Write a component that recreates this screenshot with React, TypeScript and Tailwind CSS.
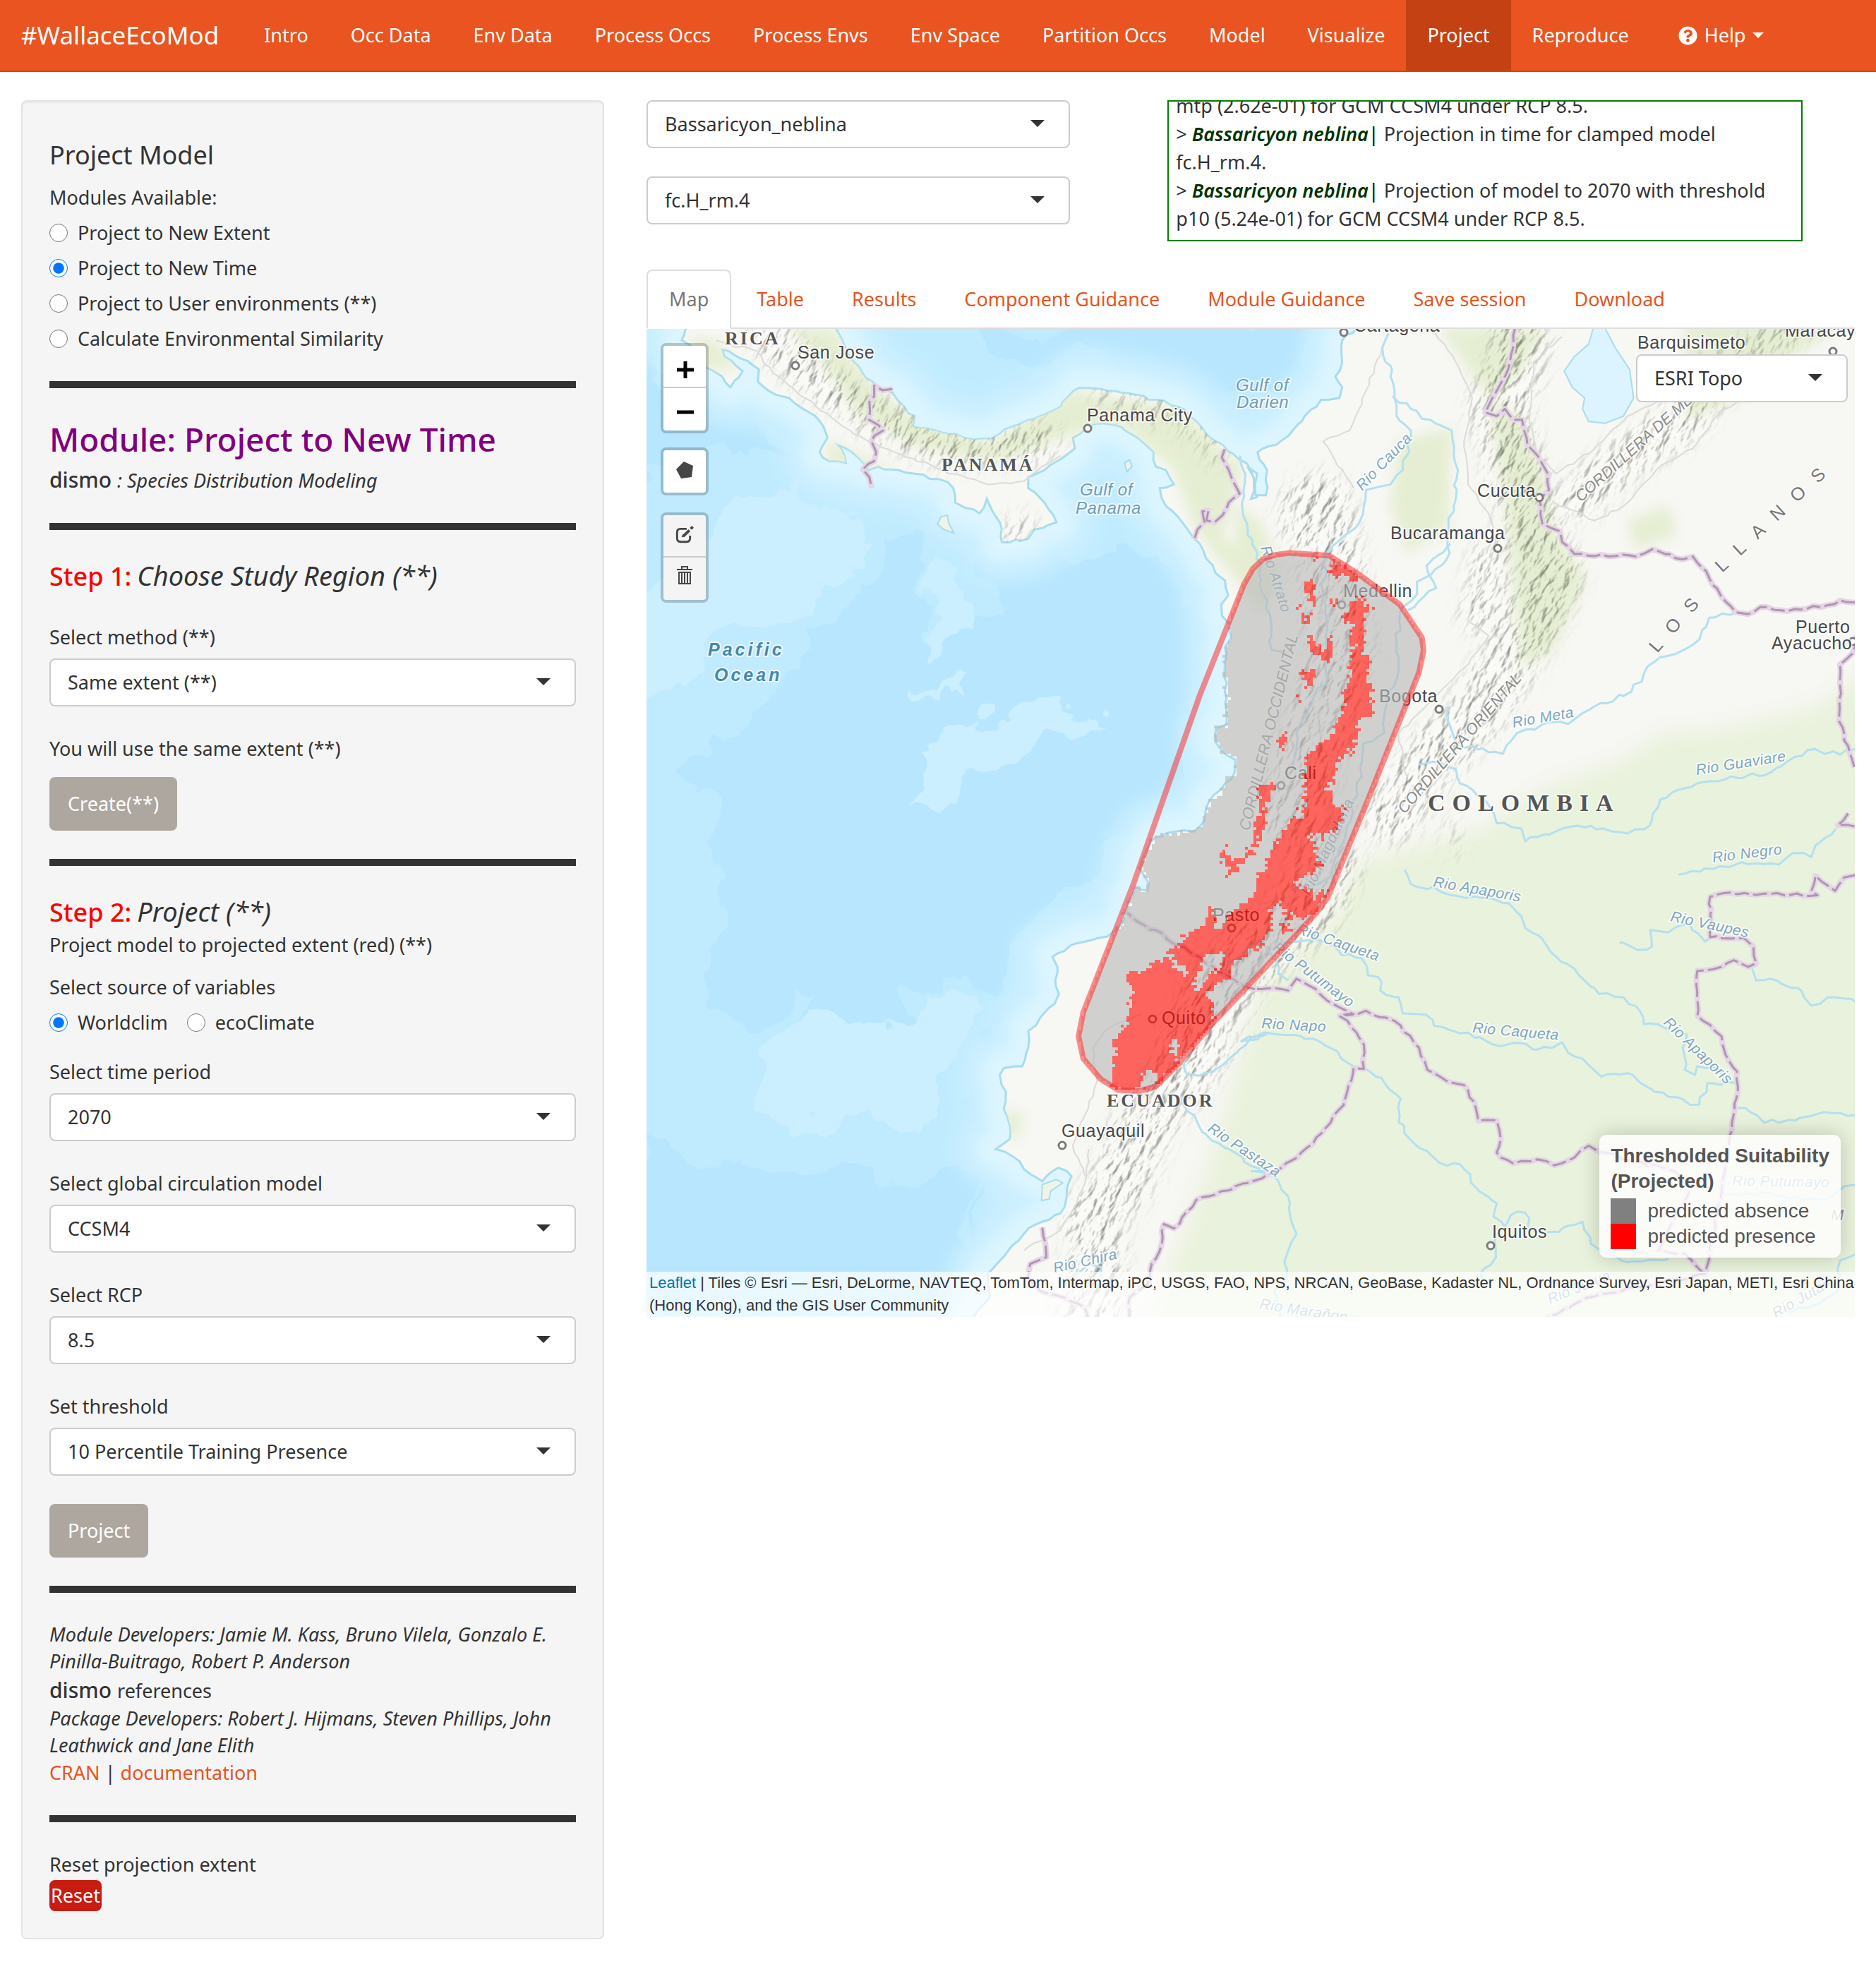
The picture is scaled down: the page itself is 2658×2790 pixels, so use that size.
import { useState, type ReactNode } from "react";
import { FaQuestionCircle } from "react-icons/fa";

/* ------------------------------------------------------------------ */
/* Map geometry                                                        */
/* ------------------------------------------------------------------ */

type Pt = [number, number];

/* Survey sheets: each one has its own origin and scale on the chart. */
const sheets = {
  A: [900, 360, 0.57398, 0.5102],
  B: [1750, 360, 0.57908, 0.5102],
  C: [1450, 760, 0.44643, 0.52296],
  D: [900, 1150, 0.57398, 0.47832],
  E: [1750, 1150, 0.57908, 0.47832],
} as const;

type Sheet = keyof typeof sheets;

function trace(...parts: [Sheet, string][]): Pt[] {
  const out: Pt[] = [];
  for (const [name, list] of parts) {
    const [ox, oy, sx, sy] = sheets[name];
    for (const pair of list.trim().split(/\s+/)) {
      const [x, y] = pair.split(",").map(Number);
      out.push([ox + x * sx, oy + y * sy]);
    }
  }
  return out;
}

function hash(a: number, b: number) {
  const s = Math.sin(a * 12.9898 + b * 78.233) * 43758.5453;
  return s - Math.floor(s) - 0.5;
}

function wobble(points: Pt[], amp: number, closed = false): Pt[] {
  const src = closed ? [...points, points[0]] : points;
  const out: Pt[] = [src[0]];
  for (let i = 1; i < src.length; i++) {
    const [x0, y0] = src[i - 1];
    const [x1, y1] = src[i];
    const len = Math.hypot(x1 - x0, y1 - y0);
    const n = Math.max(1, Math.floor(len / 9));
    for (let k = 1; k <= n; k++) {
      const t = k / n;
      const j = k === n ? 0 : amp;
      out.push([
        x0 + (x1 - x0) * t + hash(x0 + k, y1) * j,
        y0 + (y1 - y0) * t + hash(y0 + k, x1) * j,
      ]);
    }
  }
  return out;
}

const toPath = (points: Pt[], closed = false) =>
  "M" + points.map(([x, y]) => `${x.toFixed(1)} ${y.toFixed(1)}`).join("L") + (closed ? "Z" : "");

function inside(points: Pt[], x: number, y: number) {
  let hit = false;
  for (let i = 0, j = points.length - 1; i < points.length; j = i++) {
    const [xi, yi] = points[i];
    const [xj, yj] = points[j];
    if (yi > y !== yj > y && x < ((xj - xi) * (y - yi)) / (yj - yi) + xi) hit = !hit;
  }
  return hit;
}

/* Turns an area into the square cells of a raster layer, row by row. */
function rasterise(test: (x: number, y: number) => boolean, within: Pt[], jag: number) {
  const cell = 4;
  let d = "";
  for (let y = 760; y < 1560; y += cell) {
    let start = -1;
    for (let x = 1520; x <= 2032; x += cell) {
      const px = x + cell / 2 + hash(y, Math.floor(x / 8)) * jag;
      const py = y + cell / 2 + hash(x, Math.floor(y / 8)) * jag;
      const on = x < 2032 && inside(within, x + 2, y + 2) && test(px, py);
      if (on && start < 0) start = x;
      if (!on && start >= 0) {
        d += `M${start} ${y}H${x}V${y + cell}H${start}Z`;
        start = -1;
      }
    }
  }
  return d;
}

const land = trace(
  ["A", "490,180 495,206 515,250 540,300 570,345 610,375 635,385 665,425 690,450 685,480 740,490 790,500 830,515 880,512 930,480 1000,450 1050,425 1070,395 1095,372 1150,375 1200,385 1290,405 1340,425 1380,460 1410,500 1450,530 1490,570 1520,600 1527,640 1520,680 1535,675 1530,640 1535,610"],
  ["B", "30,590 45,620 50,670 75,670 78,600 55,550 100,530 130,505 170,450 210,405 255,400 262,370 245,340 262,300 262,240 300,206 320,150 1560,150"],
  ["E", "1560,1560"],
  ["D", "830,1560 835,1497 875,1440 870,1370 900,1330 960,1250 1005,1215 1050,1190 1065,1140 1077,1080 1045,1055 1030,1065 1005,1095 960,1060 930,1020 890,1000 925,970 925,930 910,880 915,830 900,780 910,760 955,755 970,700 970,650 1000,610 1035,570 1046,540 1037,500 1042,460 1030,430 1090,390 1165,370 1200,335 1215,290"],
  ["C", "330,1000 355,950 395,960 398,940 370,900 385,860 420,815 480,800 540,800 575,770 580,735 640,670 670,640 672,605 640,590 612,560 612,520 645,510 645,440 640,340 640,300 660,275 655,240 630,215 628,185 650,160 640,120 610,100 580,60 560,20"],
  ["A", "1380,790 1340,730 1310,700 1295,650 1330,640 1310,600 1285,590 1280,550 1240,510 1200,480 1150,470 1117,480 1080,510 1085,540 1050,570 1010,600 970,620 970,650 1010,690 1040,745 985,765 970,790 905,800 900,745 880,710 868,680 850,720 815,705 790,690 785,650 750,625 690,610 650,600 600,590 575,600 555,570 535,550 500,530 520,580 480,575 455,550 475,510 465,480 430,440 380,400 330,380 303,355 305,320 260,290 215,265 220,285 265,325 235,370 215,340 175,315 150,270 115,240 125,206 130,180"],
);
const coast = wobble(land, 5, true);

const envelope = trace([
  "C",
  "760,62 800,50 845,45 970,52 1060,100 1195,185 1265,275 1270,310 1255,370 1100,700 965,980 930,1020 860,1085 600,1320 480,1440 420,1490 370,1503 300,1500 245,1470 190,1415 175,1355 190,1290 350,940 560,430 700,130 728,88",
]);

const presence = [
  "1055,165 1078,165 1078,185 1108,188 1105,205 1078,215 1080,260 1083,300 1075,318 1100,322 1100,360 1092,390 1110,410 1110,460 1102,488 1060,495 1065,520 1058,550 1050,570 1045,602 1035,570 1015,595 995,600 998,635 980,660 960,680 985,695 978,725 1005,730 1025,742 1008,755 1008,775 990,800 950,815 905,790 915,830 930,850 925,880 945,870 948,885 920,915 885,925 845,940 885,950 915,965 918,995 950,965 965,965 960,975 910,1030 870,1035 840,1020 805,990 780,1015 785,1050 775,1095 740,1115 700,1140 665,1160 650,1200 610,1220 575,1240 600,1265 605,1300 600,1325 560,1365 500,1410 480,1440 440,1475 420,1490 380,1503 310,1503 278,1495 280,1455 290,1420 288,1370 300,1335 328,1330 335,1270 345,1230 330,1215 325,1195 345,1180 385,1185 415,1155 450,1145 475,1155 490,1185 515,1185 480,1140 455,1118 495,1112 500,1095 550,1060 580,1045 590,1010 598,985 605,1020 620,1070 640,1065 640,1030 680,1005 710,1000 720,970 745,960 740,915 770,905 780,850 810,825 830,790 850,760 885,765 890,740 895,600 925,570 975,545 985,520 1010,490 1015,415 1035,400 1035,330 1050,300 1035,270 1040,235 1010,220 1020,205 1045,180",
  "970,85 990,68 1060,105 1055,125 1010,100 990,120 978,110",
  "883,105 900,125 925,115 928,135 918,160 920,185 905,180 905,155 890,140",
  "885,215 915,208 914,247 890,247",
  "895,258 915,270 935,300 960,306 962,280 975,275 988,305 965,340 945,322 910,304",
  "885,365 922,362 920,385 908,395 905,425 895,390 885,385",
  "822,535 838,525 835,560 815,588 800,575",
  "740,690 775,665 798,675 795,700 765,725 762,765 772,772 757,800 745,840 720,872 690,887 682,905 655,912 650,932 640,925 655,900 640,880 620,875 630,853 648,858 660,882 690,866 720,848 733,810 735,760 752,750 752,700",
  "925,50 943,50 943,64 925,64",
  "863,435 874,435 874,444 863,444",
  "865,736 874,736 874,744 865,744",
  "650,828 660,828 660,838 650,838",
  "875,182 884,182 884,198 875,198",
  "983,174 990,150 992,182 1005,190 985,186",
  "820,1055 845,1050 842,1072 820,1078",
  "825,1018 850,1012 852,1045 835,1040",
].map((s) => trace(["C", s]));

const gaps = [
  "580,1132 620,1122 640,1140 620,1165 590,1190 555,1225 543,1225 548,1192 567,1160",
  "460,1365 500,1368 502,1385 482,1410 465,1385",
  "365,1498 385,1475 385,1455 405,1445 422,1460 418,1492",
].map((s) => trace(["C", s]));

const isPresent = (x: number, y: number) =>
  presence.some((a) => inside(a, x, y)) && !gaps.some((h) => inside(h, x, y));

const presenceCells = rasterise(isPresent, envelope, 9);
const absenceCells = rasterise((x, y) => inside(land, x, y) && !isPresent(x, y), envelope, 9);

const islands = [
  trace(["A", "755,730 770,725 775,750 787,775 762,765 746,750"]),
  trace(["A", "1208,580 1220,572 1226,590 1214,604"]),
  trace(["D", "1005,1105 1040,1090 1055,1100 1025,1125 1022,1148 1003,1152"]),
];

const lake = trace([
  "B",
  "880,190 905,206 930,260 965,320 975,400 950,450 905,470 865,465 850,430 855,400 825,370 805,325 830,285 865,250",
]);

const borders = [
  trace(["A", "635,375 610,378 590,365 590,395 578,410 577,460 600,475 612,490 590,505 583,520 595,550 590,575 562,598 578,620 584,650"]),
  trace(["A", "1455,542 1448,565 1465,600 1480,640 1492,665 1465,690 1450,725 1430,745 1410,740 1415,712 1400,715 1405,745 1388,765 1380,792"]),
  trace(["B", "685,206 680,260 668,320 640,380 612,440 640,450 660,430 680,460 702,460 715,530 750,580 765,610 768,655 745,680 752,750 795,770 800,800 830,833 980,840 1020,820 1095,848 1120,840 1160,900 1225,995 1255,1000 1285,980 1350,992 1450,975 1480,962 1530,966"]),
  trace(["B", "1520,1060 1510,1110 1480,1140 1478,1280 1490,1350 1515,1425"]),
  trace(["E", "1500,5 1475,40 1520,45"]),
  trace(["E", "1520,188 1490,195 1468,235 1420,190 1410,235 1425,248 1210,240 1162,253 1162,372 1245,375 1268,400 1275,450 1255,460 1220,440 1190,460 1131,472 1131,605 1190,665 1200,720 1228,770 1230,830 1210,960 1180,1190 1150,1370 1100,1310 1035,1300 1060,1240 1120,1100 1060,1060 900,1010 865,990 830,1025 780,1048 740,1030 680,1042 640,1010 650,970 640,915 595,915 585,860 560,810 520,800 470,765 450,700 390,620 320,590 300,600 255,605 290,600 240,570 180,515 150,495 130,530 50,525"], ["C", "740,1228 690,1215 620,1180 560,1140 470,1100 440,1075 400,1065 330,1020"]),
  trace(["E", "255,605 275,620 315,690 315,762 290,760 265,870 190,985 95,1070 0,1110"], ["D", "1480,1115 1385,1150 1330,1235 1305,1222 1300,1280 1275,1340 1265,1400 1220,1440 1220,1520"]),
  trace(["D", "1005,1232 1015,1320 975,1340 970,1380 1000,1420 1060,1440 1110,1470 1120,1510"]),
  trace(["E", "1150,1370 980,1410 860,1440 760,1500"]),
];

const rivers = [
  trace(["B", "375,220 360,260 380,310 390,400 395,450 430,490 420,560 410,600 380,640 320,655 315,700 295,760 250,800 220,840 215,960 225,1040 225,1180 180,1260 150,1330 140,1430"]),
  trace(["B", "385,395 430,430 490,470 530,490 535,560 545,600 535,700 520,780 525,830 490,875 445,910 445,945 410,980 395,1080 395,1180 370,1230 365,1330"], ["C", "1080,560 1060,700 1000,860 960,930 850,960"]),
  trace(["B", "12,560 20,600 17,690 30,780 55,830 60,920 85,1000 90,1100 120,1105"]),
  trace(["B", "1222,998 1160,1010 1120,1085 1040,1120 1000,1165 970,1215 850,1275 815,1305 780,1300 690,1330 655,1388 545,1365 522,1300 522,1255"]),
  trace(["B", "1520,1375 1480,1390 1400,1378 1350,1410 1310,1440 1230,1455 1130,1470 1040,1515 1020,1570"], ["E", "1015,40 960,65 900,50 820,45 740,75 710,88 700,50 640,35 625,-10"], ["B", "590,1500 550,1470 540,1430 500,1410 450,1418"]),
  trace(["E", "1085,187 1170,170 1240,150 1330,157 1365,122 1410,135 1420,100 1470,50"]),
  trace(["E", "415,172 430,215 500,235 530,248 600,255 670,272 700,310 710,345 750,375 785,430 830,465 855,500 890,540 950,550 990,590 1000,630 1050,640 1105,660 1095,700 1100,765 1125,780 1130,755 1190,770 1200,800 1225,805"]),
  trace(["E", "940,388 985,410 1020,400 1015,350 1060,358 1110,330 1150,385 1165,372"]),
  trace(["E", "1265,465 1275,500 1310,495 1385,530 1410,575 1450,550 1520,565"]),
  trace(["E", "95,385 150,385 205,380 260,425 310,435 325,485 350,490 355,530 400,550 410,598 450,600 520,645 570,655 630,690 680,685 740,705 800,683 815,715 860,745 895,785 960,775 1000,810 1060,845 1135,868 1155,805 1225,805"]),
  trace(["E", "-40,480 60,380 100,440 105,480 130,500"]),
  trace(["C", "510,1420 520,1460 600,1450 660,1410 720,1360 780,1345"], ["E", "15,680 60,660 160,665 250,710 290,755 330,770 405,850 400,920 440,985 500,1040 550,1045 575,1075 590,1115 640,1160 632,1200 660,1230 690,1185 720,1205 715,1235 770,1245 850,1215 870,1280 960,1335 1060,1325"]),
  trace(["E", "660,1230 635,1270 638,1320 600,1370 610,1400"]),
  trace(["D", "1340,840 1380,900 1400,950 1480,1010 1520,1050 1568,1065"], ["E", "40,1065 95,1080 130,1140 135,1200 150,1250 130,1300 120,1400 95,1420 110,1500"]),
  trace(["E", "1228,878 1260,890 1295,922 1370,915 1440,890 1520,898"]),
  trace(["E", "1190,1140 1260,1130 1340,1140 1440,1150 1490,1110 1520,1105"]),
  trace(["E", "1520,1310 1480,1330 1475,1420 1400,1470 1340,1480"]),
  trace(["C", "1355,20 1280,80 1310,140 1220,200"]),
  trace(["D", "1060,1400 1090,1370 1120,1340 1150,1350 1150,1380"]),
];

const roads = [
  trace(["A", "200,240 300,270 340,330 420,400 540,500 640,550 760,600 870,640 960,630 1050,560"]),
  trace(["B", "490,220 540,300 580,400 560,520 570,640 620,720 640,800 570,1020 620,1060 560,1150 480,1240 400,1330 420,1450"]),
  trace(["B", "360,260 320,380 280,490 215,520 290,650"]),
  trace(["B", "800,230 730,300 720,450 740,560 785,610 880,540 960,450 1050,400"]),
  trace(["B", "780,690 880,740 950,700 1030,600 1120,540 1180,450 1230,410"]),
  trace(["D", "1120,1000 1110,1100 1080,1180 1050,1240 960,1300"]),
  trace(["D", "1250,600 1170,640 1130,700 1140,800 1110,900 1080,990 1110,1080"]),
];

const deeps = [
  trace(["A", "880,870 1000,830 1200,830 1330,860 1420,980 1420,1100 1390,1300 1290,1568"], ["D", "1100,200 1000,330 880,540 700,520 620,600 430,640 420,560 300,650 180,600 200,380 200,0"], ["A", "130,1430 250,1280 400,1200 400,1060 560,950 590,790 680,780 720,900 700,1050 900,1000"]),
  trace(["D", "0,970 350,1070 530,1060 600,1110 740,1060 830,1040 800,1520 0,1520"]),
  trace(["A", "820,180 880,290 1100,290 1250,320 1400,350 1560,420"], ["B", "90,390 170,330 225,180"]),
  trace(["A", "0,300 150,400 300,470 420,560 300,540 160,540 0,620"]),
  trace(["D", "830,1400 840,1000 880,680 930,560 960,580 890,760 860,1000 850,1380"]),
];

const shallows = [
  trace(["D", "500,600 640,580 780,540 830,620 740,900 560,940 400,900 280,880 270,760"]),
  trace(["A", "740,860 830,900 830,1030 740,1110 710,1060"]),
  trace(["A", "900,1260 1080,1240 1160,1280 900,1430 740,1540 640,1540 700,1380"]),
  trace(["A", "690,1180 760,1210 830,1180 800,1240 720,1230"]),
  trace(["A", "230,640 420,640 540,700 520,860 400,1000 220,1040 60,1200 0,1260 0,980 160,860"]),
];

const jungle = trace(
  ["B", "1560,1150 1420,1260 1200,1320 1050,1330 940,1410 760,1480 600,1600"],
  ["E", "300,150 230,330 60,520"],
  ["D", "1480,800 1440,960 1400,1100 1340,1300 1260,1560"],
  ["E", "1560,1560"],
);

const greens = [
  trace(["A", "490,206 560,330 700,470 880,520 1080,380 1350,430 1500,600 1450,780 1560,900 1480,900 1380,760 1330,600 1200,470 1080,500 900,580 700,540 540,440 480,330 380,206"]),
  trace(["A", "560,560 640,600 560,600 480,580 470,520"]),
  trace(["B", "400,520 530,480 520,760 420,830 380,700"]),
  trace(["B", "620,400 700,450 760,620 780,760 860,900 780,1100 700,1150 660,700"]),
  trace(["B", "960,740 1060,700 1080,780 980,820"]),
  trace(["B", "500,206 760,206 700,330 620,400"]),
  trace(["B", "1100,150 1540,150 1400,260 1240,400 1100,460"]),
  trace(["B", "0,700 60,740 120,900 60,1000 0,900"]),
  trace(["A", "130,230 200,240 250,320 180,320"]),
  trace(["D", "910,880 960,900 940,980 920,950"]),
];

const ridges: [Pt[], number][] = [
  [trace(["A", "330,230 440,340 600,460 760,540 1000,520"]), 50],
  [trace(["A", "1150,400 1350,450 1450,560"]), 22],
  [trace(["A", "920,770 970,750"]), 24],
  [trace(["B", "700,180 690,300 640,430 690,600 720,760 780,900 700,1080 600,1260 480,1400 380,1560"]), 74],
  [trace(["B", "620,860 600,1000"]), 50],
  [trace(["B", "1180,330 1100,460 960,560 840,680"]), 54],
  [trace(["B", "1400,180 1250,280 1180,330"]), 36],
  [trace(["B", "200,700 240,900 260,1100 200,1300 140,1560"]), 90],
  [trace(["C", "960,900 900,1000 780,1100 640,1200 520,1400"]), 90],
  [trace(["D", "1400,700 1300,860 1240,960 1200,1100 1130,1200 1140,1330 1120,1500"]), 76],
  [trace(["B", "130,690 130,760"]), 20],
  [trace(["E", "530,30 535,120"]), 12],
];

type Label = { t: string; x: number; y: number; r?: number; c: keyof typeof labelStyle };

const labelStyle = {
  city: "fill-[#484848] text-[25px] tracking-wide",
  country: "fill-[#555] font-['Liberation_Serif',serif] text-[26px] font-bold tracking-[3px]",
  nation: "fill-[#555] font-['Liberation_Serif',serif] text-[34px] font-bold tracking-[10px]",
  sea: "fill-[#6f9db8] text-[24px] italic tracking-wide",
  ocean: "fill-[#4788a9] text-[25px] font-bold italic tracking-[4px]",
  river: "fill-[#7fa6bd] text-[21px] italic tracking-wide",
  range: "fill-[#8c8c88] text-[22px] italic",
  plain: "fill-[#777] text-[26px] tracking-[20px]",
};

const labels: Label[] = [
  { t: "RICA", x: 1027, y: 488, c: "country" },
  { t: "San Jose", x: 1130, y: 508, c: "city" },
  { t: "Panama City", x: 1540, y: 597, c: "city" },
  { t: "PANAMÁ", x: 1334, y: 667, c: "country" },
  { t: "Gulf of", x: 1530, y: 702, c: "sea" },
  { t: "Panama", x: 1524, y: 728, c: "sea" },
  { t: "Gulf of", x: 1751, y: 554, c: "sea" },
  { t: "Darien", x: 1752, y: 578, c: "sea" },
  { t: "Pacific", x: 1003, y: 929, c: "ocean" },
  { t: "Ocean", x: 1012, y: 965, c: "ocean" },
  { t: "Cartagena", x: 1918, y: 470, c: "city" },
  { t: "Barquisimeto", x: 2320, y: 494, c: "city" },
  { t: "Maracay", x: 2529, y: 477, c: "city" },
  { t: "Cucuta", x: 2093, y: 704, c: "city" },
  { t: "Bucaramanga", x: 1970, y: 764, c: "city" },
  { t: "Medellin", x: 1903, y: 846, c: "city" },
  { t: "Bogota", x: 1954, y: 995, c: "city" },
  { t: "Cali", x: 1820, y: 1104, c: "city" },
  { t: "Pasto", x: 1718, y: 1305, c: "city" },
  { t: "Quito", x: 1646, y: 1451, c: "city" },
  { t: "ECUADOR", x: 1568, y: 1568, c: "country" },
  { t: "Guayaquil", x: 1504, y: 1611, c: "city" },
  { t: "Iquitos", x: 2114, y: 1754, c: "city" },
  { t: "Puerto", x: 2544, y: 897, c: "city" },
  { t: "Ayacucho", x: 2510, y: 920, c: "city" },
  { t: "COLOMBIA", x: 2023, y: 1149, c: "nation" },
  { t: "LOS", x: 2348, y: 926, r: -49, c: "plain" },
  { t: "LLANOS", x: 2440, y: 812, r: -43, c: "plain" },
  { t: "Rio Cauca", x: 1930, y: 696, r: -46, c: "river" },
  { t: "Rio Meta", x: 2144, y: 1031, r: -10, c: "river" },
  { t: "Rio Guaviare", x: 2404, y: 1098, r: -9, c: "river" },
  { t: "Rio Negro", x: 2427, y: 1222, r: -7, c: "river" },
  { t: "Rio Apaporis", x: 2030, y: 1256, r: 10, c: "river" },
  { t: "Rio Vaupes", x: 2366, y: 1305, r: 12, c: "river" },
  { t: "Rio Caqueta", x: 1836, y: 1322, r: 19, c: "river" },
  { t: "Rio Putumayo", x: 1802, y: 1345, r: 37, c: "river" },
  { t: "Rio Napo", x: 1787, y: 1457, r: 3, c: "river" },
  { t: "Rio Caqueta", x: 2086, y: 1463, r: 5, c: "river" },
  { t: "Rio Apaporis", x: 2356, y: 1450, r: 44, c: "river" },
  { t: "Rio Pastaza", x: 1710, y: 1602, r: 34, c: "river" },
  { t: "Rio Chira", x: 1494, y: 1804, r: -13, c: "river" },
  { t: "Rio Putumayo", x: 2454, y: 1680, r: 1, c: "river" },
  { t: "Rio Jutai", x: 2516, y: 1868, r: -30, c: "river" },
  { t: "Rio Marañon", x: 1784, y: 1854, r: 9, c: "river" },
  { t: "Rio Jurua", x: 2196, y: 1848, r: -22, c: "river" },
  { t: "Rio Atrato", x: 1786, y: 776, r: 72, c: "river" },
  { t: "Rio Magdalena", x: 1856, y: 1270, r: -65, c: "river" },
  { t: "CORDILLERA OCCIDENTAL", x: 1770, y: 1178, r: -76, c: "range" },
  { t: "CORDILLERA ORIENTAL", x: 1990, y: 1154, r: -49, c: "range" },
  { t: "CORDILLERA DE MERIDA", x: 2240, y: 712, r: -42, c: "range" },
  { t: "M", x: 2594, y: 1729, c: "range" },
];

const towns: Pt[] = [
  [1127, 518], [1541, 607], [1904, 471], [2597, 498], [2181, 705], [2122, 777], [1901, 857],
  [2039, 1005], [1815, 1113], [1745, 1315], [1633, 1444], [1505, 1623], [2112, 1765], [2625, 909],
];

function BaseMap() {
  return (
    <svg
      viewBox="916 466 1712 1400"
      preserveAspectRatio="xMidYMid slice"
      className="block h-full w-full font-['Liberation_Sans',Arial,sans-serif]"
      role="img"
      aria-label="Topographic map of north-western South America with projected suitability"
    >
      <defs>
        <clipPath id="land-clip">
          <path d={toPath(coast, true)} />
        </clipPath>
        <filter id="soft" x="-10%" y="-10%" width="120%" height="120%">
          <feGaussianBlur stdDeviation="14" />
        </filter>
        <filter id="soft-small" x="-10%" y="-10%" width="120%" height="120%">
          <feGaussianBlur stdDeviation="8" />
        </filter>
        <filter id="ragged" x="-10%" y="-10%" width="120%" height="120%">
          <feTurbulence type="fractalNoise" baseFrequency="0.012" numOctaves="4" seed="4" />
          <feDisplacementMap in="SourceGraphic" scale="110" xChannelSelector="R" yChannelSelector="G" />
        </filter>
        <filter id="relief" x="0" y="0" width="100%" height="100%" colorInterpolationFilters="sRGB">
          <feTurbulence type="fractalNoise" baseFrequency="0.04 0.085" numOctaves="3" seed="11" />
          <feColorMatrix values="0 0 0 0 0  0 0 0 0 0  0 0 0 0 0  1 0 0 0 0" />
          <feDiffuseLighting surfaceScale="7" diffuseConstant="1.36" lightingColor="#fffdf4">
            <feDistantLight azimuth="250" elevation="54" />
          </feDiffuseLighting>
        </filter>
        <mask id="ridge-mask" maskUnits="userSpaceOnUse" x="916" y="466" width="1712" height="1400">
          <g filter="url(#soft)" fill="none" stroke="#fff" strokeLinecap="round" strokeLinejoin="round">
            {ridges.map(([p, w], i) => (
              <path key={i} d={toPath(p)} strokeWidth={w} />
            ))}
          </g>
        </mask>
      </defs>

      <rect x="916" y="466" width="1712" height="1400" fill="#c0ebff" />
      <g filter="url(#ragged)">
        <g fill="#b7e6fe">
          {deeps.map((p, i) => (
            <path key={i} d={toPath(p, true)} />
          ))}
        </g>
        <g fill="#cbefff">
          {shallows.map((p, i) => (
            <path key={i} d={toPath(p, true)} />
          ))}
        </g>
      </g>
      <path d={toPath(land, true)} fill="none" stroke="#cdf0ff" strokeWidth="110" strokeLinejoin="round" filter="url(#soft)" />
      <path d={toPath(land, true)} fill="none" stroke="#dcf5ff" strokeWidth="52" strokeLinejoin="round" filter="url(#soft-small)" />

      <path d={toPath(coast, true)} fill="#f7f7f3" stroke="#a8dcef" strokeWidth="3" />
      {islands.map((p, i) => (
        <path key={i} d={toPath(p, true)} fill="#f0f4e4" stroke="#a8dcef" strokeWidth="2" />
      ))}
      <g clipPath="url(#land-clip)">
        <path d={toPath(jungle, true)} fill="#e9f2dc" filter="url(#soft)" />
        <g fill="#e5eed3" filter="url(#soft-small)">
          {greens.map((p, i) => (
            <path key={i} d={toPath(p, true)} />
          ))}
        </g>
        <g mask="url(#ridge-mask)" className="mix-blend-multiply">
          <rect x="600" y="100" width="2400" height="2200" transform="rotate(-58 1772 1166)" filter="url(#relief)" opacity="0.42" />
        </g>
        <path d={toPath(lake, true)} fill="#dcf4ff" stroke="#a8dcef" strokeWidth="2" />
      </g>

      <g fill="none" stroke="#dcdbd8" strokeWidth="2" strokeLinejoin="round">
        {roads.map((p, i) => (
          <path key={i} d={toPath(wobble(p, 4))} />
        ))}
      </g>
      <g fill="none" stroke="#b4e0f0" strokeWidth="3" strokeLinejoin="round">
        {rivers.map((p, i) => (
          <path key={i} d={toPath(wobble(p, 7))} />
        ))}
      </g>
      <g fill="none" strokeLinejoin="round">
        {borders.map((p, i) => {
          const d = toPath(wobble(p, 4));
          return (
            <g key={i}>
              <path d={d} stroke="#e6d5e6" strokeWidth="8" />
              <path d={d} stroke="#ad98b0" strokeWidth="3" strokeDasharray="20 6" />
            </g>
          );
        })}
      </g>

      <g fill="#fff" stroke="#7a7a7a" strokeWidth="3">
        {towns.map(([x, y]) => (
          <circle key={`${x}-${y}`} cx={x} cy={y} r="5" />
        ))}
      </g>
      <g stroke="#fff" strokeOpacity="0.7" strokeWidth="4" strokeLinejoin="round" style={{ paintOrder: "stroke" }}>
        {labels.map((l) => (
          <text
            key={`${l.t}-${l.x}`}
            x={l.x}
            y={l.y}
            className={labelStyle[l.c]}
            transform={l.r ? `rotate(${l.r} ${l.x} ${l.y})` : undefined}
          >
            {l.t}
          </text>
        ))}
      </g>

      <path d={absenceCells} fill="#b8b8b8" opacity="0.62" shapeRendering="crispEdges" />
      <path d={presenceCells} fill="#ff0a00" opacity="0.62" shapeRendering="crispEdges" />
      <path d={toPath(envelope, true)} fill="none" stroke="#ff2020" strokeOpacity="0.5" strokeWidth="8" strokeLinejoin="round" />
    </svg>
  );
}

/* ------------------------------------------------------------------ */
/* Controls                                                            */
/* ------------------------------------------------------------------ */

function SelectBox({ id, value, label }: { id: string; value: string; label?: string }) {
  return (
    <div className="relative">
      <select
        id={id}
        aria-label={label}
        className="block h-[68px] w-full appearance-none rounded-lg border-2 border-[#ccc] bg-white px-6 text-[27px] leading-10 text-[#333]"
      >
        <option>{value}</option>
      </select>
      <span className="pointer-events-none absolute top-7 right-9 h-0 w-0 border-x-10 border-t-10 border-x-transparent border-t-[#333]" />
    </div>
  );
}

function Field({ id, label, value, className }: { id: string; label: string; value: string; className: string }) {
  return (
    <div className={className}>
      <label htmlFor={id} className="mb-[10px] block leading-10">
        {label}
      </label>
      <SelectBox id={id} value={value} />
    </div>
  );
}

function Radio({ name, label, checked, onChange }: { name: string; label: string; checked: boolean; onChange: () => void }) {
  return (
    <label className="flex items-center gap-[14px] leading-10">
      <input type="radio" name={name} checked={checked} onChange={onChange} className="size-[26px] accent-[#0075ff]" />
      {label}
    </label>
  );
}

const Rule = ({ className }: { className: string }) => <hr className={`h-[10px] border-0 bg-[#333] ${className}`} />;

const modules = [
  "Project to New Extent",
  "Project to New Time",
  "Project to User environments (**)",
  "Calculate Environmental Similarity",
];

function StepHeading({ step, title }: { step: string; title: string }) {
  return (
    <h4 className="mt-11 flex items-baseline gap-2 leading-10">
      <span className="text-[36px] font-medium text-[#f00]">{step}</span>
      <i className="text-[38px]">{title}</i>
    </h4>
  );
}

function Sidebar() {
  const [module, setModule] = useState(modules[1]);
  const [source, setSource] = useState("Worldclim");
  return (
    <aside className="rounded-lg border-2 border-[#e3e3e3] bg-[#f5f5f5] p-[38px] shadow-[inset_0_2px_2px_rgba(0,0,0,0.05)]">
      <h4 className="mt-[18px] text-[36px] leading-10">Project Model</h4>
      <fieldset className="mt-5">
        <legend className="leading-10">Modules Available:</legend>
        <div className="mt-[10px] flex flex-col gap-[10px]">
          {modules.map((m) => (
            <Radio key={m} name="module" label={m} checked={module === m} onChange={() => setModule(m)} />
          ))}
        </div>
      </fieldset>

      <Rule className="mt-10" />
      <h3 className="mt-[46px] text-[46px] leading-[52px] font-medium text-[#800080]">Module: Project to New Time</h3>
      <p className="mt-3 flex items-baseline gap-2 leading-10">
        <span className="text-[30px] font-medium">dismo</span>
        <i>: Species Distribution Modeling</i>
      </p>
      <Rule className="mt-10" />

      <StepHeading step="Step 1:" title="Choose Study Region (**)" />
      <Field id="method" label="Select method (**)" value="Same extent (**)" className="mt-[46px]" />
      <p className="mt-10 leading-10">You will use the same extent (**)</p>
      <button type="button" className="mt-5 block h-[76px] rounded-lg bg-[#aea79f] px-[26px] text-white">
        Create(**)
      </button>

      <Rule className="mt-10" />
      <StepHeading step="Step 2:" title="Project (**)" />
      <p className="mt-[6px] leading-10">Project model to projected extent (red) (**)</p>
      <fieldset className="mt-5">
        <legend className="leading-10">Select source of variables</legend>
        <div className="mt-[10px] flex gap-[27px]">
          {["Worldclim", "ecoClimate"].map((s) => (
            <Radio key={s} name="source" label={s} checked={source === s} onChange={() => setSource(s)} />
          ))}
        </div>
      </fieldset>
      <Field id="period" label="Select time period" value="2070" className="mt-[30px]" />
      <Field id="gcm" label="Select global circulation model" value="CCSM4" className="mt-10" />
      <Field id="rcp" label="Select RCP" value="8.5" className="mt-10" />
      <Field id="threshold" label="Set threshold" value="10 Percentile Training Presence" className="mt-10" />
      <button type="button" className="mt-10 block h-[76px] rounded-lg bg-[#aea79f] px-[26px] text-white">
        Project
      </button>

      <Rule className="mt-10" />
      <p className="mt-10 leading-[38px] italic">
        Module Developers: Jamie M. Kass, Bruno Vilela, Gonzalo E.
        <br />
        Pinilla-Buitrago, Robert P. Anderson
      </p>
      <p className="mt-[2px] flex items-baseline gap-2 leading-10">
        <span className="text-[30px] font-medium">dismo</span>
        <span>references</span>
      </p>
      <p className="leading-[38px] italic">
        Package Developers: Robert J. Hijmans, Steven Phillips, John
        <br />
        Leathwick and Jane Elith
      </p>
      <p className="leading-10">
        <a href="#cran" className="text-[#e95420]">
          CRAN
        </a>{" "}
        |{" "}
        <a href="#documentation" className="text-[#e95420]">
          documentation
        </a>
      </p>

      <Rule className="mt-10" />
      <p className="mt-10 leading-10">Reset projection extent</p>
      <button type="button" className="mt-[2px] block h-11 rounded-lg bg-[#c71c0f] px-[2px] text-white">
        Reset
      </button>
    </aside>
  );
}

const sections = [
  "Intro", "Occ Data", "Env Data", "Process Occs", "Process Envs", "Env Space",
  "Partition Occs", "Model", "Visualize", "Project", "Reproduce",
];

function Navbar() {
  return (
    <nav className="flex h-[102px] items-stretch border-b-2 border-[#d34615] bg-[#e95420] whitespace-nowrap text-white">
      <a href="#home" className="mr-1 flex items-center px-[30px] text-[35px]">
        #WallaceEcoMod
      </a>
      {sections.map((s) => (
        <a
          key={s}
          href={`#${s}`}
          className={"flex items-center px-[30px] " + (s === "Project" ? "bg-[#c34113]" : "")}
          aria-current={s === "Project" ? "page" : undefined}
        >
          {s}
        </a>
      ))}
      <button type="button" className="flex items-center gap-[10px] pl-10">
        <FaQuestionCircle className="size-[27px]" />
        Help
        <span className="h-0 w-0 border-x-8 border-t-8 border-x-transparent border-t-white" />
      </button>
    </nav>
  );
}

function LogEntry({ children }: { children: ReactNode }) {
  return (
    <p className="shrink-0 leading-10">
      {">"} <b className="font-medium text-[#003300]"><i className="font-semibold">Bassaricyon neblina</i>|</b> {children}
    </p>
  );
}

function Log() {
  return (
    <div className="flex h-[200px] w-[900px] flex-col justify-end overflow-hidden border-2 border-[#008000] px-[10px] pb-[10px] whitespace-nowrap">
      <p className="shrink-0 leading-10">mtp (2.62e-01) for GCM CCSM4 under RCP 8.5.</p>
      <LogEntry>
        Projection in time for clamped model
        <br />
        fc.H_rm.4.
      </LogEntry>
      <LogEntry>
        Projection of model to 2070 with threshold
        <br />
        p10 (5.24e-01) for GCM CCSM4 under RCP 8.5.
      </LogEntry>
    </div>
  );
}

const tabs = ["Map", "Table", "Results", "Component Guidance", "Module Guidance", "Save session", "Download"];

function Tabs() {
  return (
    <div role="tablist" className="flex gap-1 border-b-2 border-[#ddd]">
      {tabs.map((t) => (
        <button
          key={t}
          type="button"
          role="tab"
          aria-selected={t === "Map"}
          className={
            "-mb-[2px] h-[84px] rounded-t-lg border-2 px-[30px] " +
            (t === "Map" ? "border-[#ddd] border-b-white bg-white text-[#777]" : "border-transparent text-[#e95420]")
          }
        >
          {t}
        </button>
      ))}
    </div>
  );
}

function MapBar({ children, className = "" }: { children: ReactNode; className?: string }) {
  return (
    <div className={`w-[68px] overflow-hidden rounded-lg border-4 border-black/20 bg-clip-padding ${className}`}>{children}</div>
  );
}

function MapControls() {
  return (
    <div className="absolute top-5 left-5 flex flex-col">
      <MapBar>
        <button type="button" aria-label="Zoom in" className="flex h-[60px] w-full items-center justify-center border-b-2 border-[#ccc] bg-white">
          <svg viewBox="0 0 60 60" className="size-[60px]" stroke="#000" strokeWidth="5">
            <path d="M19 35H43M31 23V47" />
          </svg>
        </button>
        <button type="button" aria-label="Zoom out" className="flex h-[60px] w-full items-center justify-center bg-white">
          <svg viewBox="0 0 60 60" className="size-[60px]" stroke="#000" strokeWidth="5">
            <path d="M19 34H43" />
          </svg>
        </button>
      </MapBar>
      <MapBar className="mt-5">
        <button type="button" aria-label="Draw a polygon" className="block h-[60px] w-full bg-white">
          <svg viewBox="0 0 60 60" className="size-[60px]" fill="#464646">
            <path d="M29 16 42 22 40 38 25 40 18 27Z" />
          </svg>
        </button>
      </MapBar>
      <MapBar className="mt-6">
        <button type="button" aria-label="Edit layers" className="block h-[60px] w-full border-b-2 border-[#ccc] bg-[#f4f4f4]">
          <svg viewBox="0 0 60 60" className="size-[58px]" fill="none" stroke="#464646">
            <path d="M34 20H25Q20 20 20 25V34Q20 39 25 39H34Q39 39 39 34V30" strokeWidth="3" />
            <path d="M29 31 38 22" strokeWidth="4" />
            <path d="M40 20 43 17" strokeWidth="4" />
            <path d="M27 32 29 28 31 31Z" fill="#464646" strokeWidth="1" />
          </svg>
        </button>
        <button type="button" aria-label="Delete layers" className="block h-[60px] w-full bg-[#f4f4f4]">
          <svg viewBox="0 0 60 60" className="size-[60px]" fill="none" stroke="#464646" strokeWidth="2">
            <path d="M19 17H41M26 17V13H34V17" />
            <path d="M22 21H38V37H22ZM26 21V37M30 21V37M34 21V37" />
          </svg>
        </button>
      </MapBar>
    </div>
  );
}

function Legend() {
  return (
    <div className="mr-5 mb-5 rounded-[10px] bg-white/80 px-4 py-3 text-[28px] leading-9 text-[#555] shadow-[0_0_30px_rgba(0,0,0,0.2)]">
      <p className="font-bold">
        Thresholded Suitability
        <br />
        (Projected)
      </p>
      <ul className="mt-[6px]">
        <li className="flex gap-4">
          <span className="size-9 bg-[#808080]" />
          predicted absence
        </li>
        <li className="flex gap-4">
          <span className="size-9 bg-[#f00]" />
          predicted presence
        </li>
      </ul>
    </div>
  );
}

function MapPanel() {
  return (
    <section className="relative h-[1400px] overflow-hidden">
      <BaseMap />
      <MapControls />
      <div className="absolute top-9 right-[10px] w-[300px]">
        <SelectBox id="basemap" value="ESRI Topo" label="Background map" />
      </div>
      <div className="absolute inset-x-0 bottom-0 flex flex-col items-end font-['Liberation_Sans',Arial,sans-serif]">
        <Legend />
        <p className="w-full bg-white/70 pl-1 text-[22px] leading-8 whitespace-nowrap text-[#333]">
          <a href="#leaflet" className="text-[#0078a8]">
            Leaflet
          </a>{" "}
          | Tiles © Esri — Esri, DeLorme, NAVTEQ, TomTom, Intermap, iPC, USGS, FAO, NPS, NRCAN, GeoBase, Kadaster NL,
          Ordnance Survey, Esri Japan, METI, Esri China
          <br />
          (Hong Kong), and the GIS User Community
        </p>
      </div>
    </section>
  );
}

export default function App() {
  return (
    <div className="min-h-screen bg-white pb-10 font-['Noto_Sans','Open_Sans',sans-serif] text-[27px] text-[#333]">
      <Navbar />
      <main className="mt-10 grid grid-cols-3 items-start">
        <div className="px-[30px]">
          <Sidebar />
        </div>
        <div className="col-span-2">
          <div className="grid grid-cols-12">
            <div className="col-span-5 flex flex-col gap-10 px-[30px]">
              <div className="w-[600px]">
                <SelectBox id="species" value="Bassaricyon_neblina" label="Species" />
              </div>
              <div className="w-[600px]">
                <SelectBox id="model" value="fc.H_rm.4" label="Model" />
              </div>
            </div>
            <div className="col-span-7 px-[30px]">
              <Log />
            </div>
          </div>
          <div className="mt-10 px-[30px]">
            <Tabs />
            <MapPanel />
          </div>
        </div>
      </main>
    </div>
  );
}
